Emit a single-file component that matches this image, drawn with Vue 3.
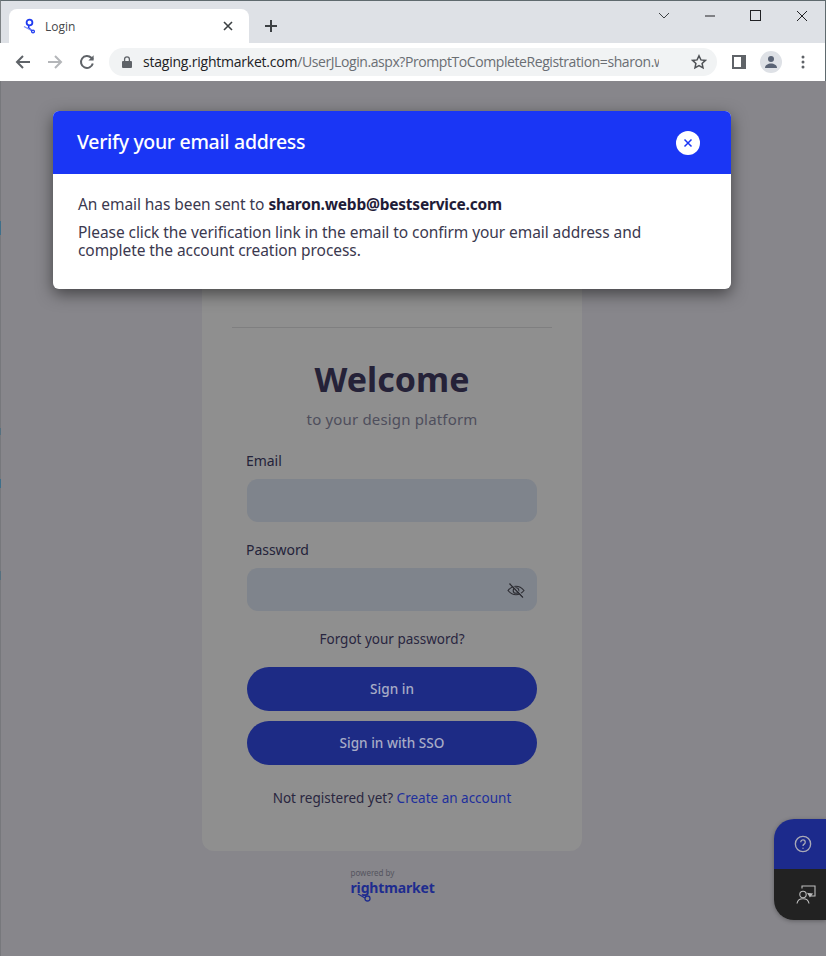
<script setup>
const url = { host: 'staging.rightmarket.com', path: '/UserJLogin.aspx?PromptToCompleteRegistration=sharon.webb@bestservice.com' }
</script>

<template>
  <div class="window">
    <div class="tabbar">
      <div class="tab">
        <svg class="favicon" width="16" height="16" viewBox="0 0 16 16" fill="none" stroke="#1f3bf0" stroke-width="1.800">
          <circle cx="8.500" cy="4.500" r="2.900" />
          <path d="M8 7.400 L7.500 9.500 L11 13" stroke-width="1.500" />
          <path d="M3 8.500 L10.500 12.500" stroke="#7d8df5" stroke-width="1.400" />
          <circle cx="12" cy="13.500" r="1.400" stroke-width="1.300" />
        </svg>
        <span class="tab-title">Login</span>
        <svg class="tab-close" width="10" height="10" viewBox="0 0 10 10" stroke="#3c4043" stroke-width="1.600"><path d="M1 1l8 8M9 1l-8 8" /></svg>
      </div>
      <svg class="new-tab" width="14" height="14" viewBox="0 0 14 14" stroke="#3c4043" stroke-width="2"><path d="M7 1v12M1 7h12" /></svg>
      <div class="win-controls">
        <div class="win-btn"><svg width="12" height="8" viewBox="0 0 12 8" fill="none" stroke="#3c4043"><path d="M1 1l5 5 5-5" /></svg></div>
        <div class="win-btn"><svg width="12" height="2" viewBox="0 0 12 2" stroke="#202124"><path d="M1 1h10" /></svg></div>
        <div class="win-btn"><svg class="nudge" width="11" height="11" viewBox="0 0 11 11" fill="none" stroke="#202124"><rect x=".5" y=".5" width="10" height="10" /></svg></div>
        <div class="win-btn"><svg width="12" height="12" viewBox="0 0 12 12" stroke="#202124"><path d="M1 1l10 10M11 1L1 11" /></svg></div>
      </div>
    </div>

    <div class="toolbar">
      <div class="tool"><svg width="16" height="16" viewBox="0 0 16 16" fill="none" stroke="#5f6368" stroke-width="2"><path d="M15 8H2M8 2L2 8l6 6" /></svg></div>
      <div class="tool"><svg width="16" height="16" viewBox="0 0 16 16" fill="none" stroke="#b4b6b9" stroke-width="2"><path d="M1 8h13M8 2l6 6-6 6" /></svg></div>
      <div class="tool"><svg width="16" height="16" viewBox="0 0 16 16" fill="none" stroke="#5f6368" stroke-width="2"><path d="M13.800 9.500A6 6 0 1 1 12.300 3.800L14 5.500" /><path d="M14.600 1.200v5.200H9.400z" fill="#5f6368" stroke="none" /></svg></div>
      <div class="omnibox">
        <svg class="lock" width="10" height="12" viewBox="0 0 10 12"><path fill="#5f6368" d="M1 5h8a1 1 0 0 1 1 1v5a1 1 0 0 1-1 1H1a1 1 0 0 1-1-1V6a1 1 0 0 1 1-1z" /><path fill="none" stroke="#5f6368" stroke-width="1.300" d="M2.600 5V3.200a2.400 2.400 0 0 1 4.800 0V5" /></svg>
        <div class="url"><span class="host">{{ url.host }}</span><span class="path">{{ url.path }}</span></div>
        <svg class="star" width="16" height="16" viewBox="0 0 16 16" fill="none" stroke="#4f5256" stroke-width="1.500"><path d="M8 1.800l1.900 4.100 4.500.5-3.300 3 .9 4.500L8 11.600l-4 2.300.9-4.500-3.300-3 4.500-.5z" /></svg>
      </div>
      <div class="tool"><svg width="14" height="14" viewBox="0 0 14 14"><path fill="#5f6368" fill-rule="evenodd" d="M0 0h14v14H0zM2 2v10h7V2z" /></svg></div>
      <div class="tool">
        <div class="avatar"><svg width="14" height="14" viewBox="0 0 14 14" fill="#5a6375"><circle cx="7" cy="4" r="3" /><path d="M1 13c0-3 3-4.500 6-4.500s6 1.500 6 4.500z" /></svg></div>
      </div>
      <div class="tool"><svg width="4" height="14" viewBox="0 0 4 14" fill="#5f6368"><circle cx="2" cy="2" r="1.500" /><circle cx="2" cy="7" r="1.500" /><circle cx="2" cy="12" r="1.500" /></svg></div>
    </div>

    <main class="page">
      <section class="card">
        <div class="divider"></div>
        <h1 class="welcome">Welcome</h1>
        <p class="sub">to your design platform</p>
        <form class="form">
          <label class="label">Email</label>
          <div class="input"></div>
          <label class="label label-pass">Password</label>
          <div class="input input-pass">
            <svg width="20" height="18" viewBox="0 0 20 18" fill="none" stroke="#2c2c32" stroke-width="1.100">
              <path d="M2 9.500C4.500 6.500 7 5.200 10 5.200s5.500 1.300 8 4.300c-2.500 3-5 4.300-8 4.300s-5.500-1.300-8-4.300z" />
              <circle cx="10" cy="9.500" r="2.800" />
              <path d="M3.500 2.500l13.500 14" stroke-width="1.400" />
              <path d="M5 2.500l13 13.500" stroke="#7f848c" stroke-width="1" />
            </svg>
          </div>
          <a class="forgot">Forgot your password?</a>
          <button type="button" class="btn">Sign in</button>
          <button type="button" class="btn btn-sso">Sign in with SSO</button>
          <p class="register">Not registered yet? <a class="create">Create an account</a></p>
        </form>
      </section>

      <div class="powered">
        <span class="powered-by">powered by</span>
        <span class="brand">rightmarket<svg class="brand-node" width="16" height="9" viewBox="0 0 16 9" fill="none" stroke="#1e2c8f" stroke-width="1.300"><path d="M1 1l7 4" /><circle cx="10.500" cy="5.500" r="2.500" /></svg></span>
      </div>

      <div class="modal">
        <header class="modal-head">
          <h2 class="modal-title">Verify your email address</h2>
          <button type="button" class="modal-close">
            <svg width="10" height="10" viewBox="0 0 10 10" stroke="#1a36f5" stroke-width="1.500"><path d="M1.500 1.500l7 7M8.500 1.500l-7 7" /></svg>
          </button>
        </header>
        <div class="modal-body">
          <p class="m-line">An email has been sent to <strong>sharon.webb@bestservice.com</strong></p>
          <p class="m-text">Please click the verification link in the email to confirm your email address and complete the account creation process.</p>
        </div>
      </div>

      <div class="help">
        <div class="help-top">
          <svg width="18" height="18" viewBox="0 0 20 20" fill="none" stroke="#a9a9b6" stroke-width="1.500"><circle cx="10" cy="10" r="8.500" /><path d="M7.500 8a2.500 2.500 0 1 1 3.800 2.100c-.9.600-1.300 1-1.300 2" /><path d="M10 14.200v1.200" /></svg>
        </div>
        <div class="help-bottom">
          <svg width="20" height="19" viewBox="0 0 20 19" fill="none" stroke="#bdbdbd" stroke-width="1.100"><path d="M6 3.500V1h13v10h-4" /><circle cx="7" cy="9.500" r="3.200" /><path d="M1 18.500c.5-3.500 3-4.800 6-4.800s5.500 1.300 6 4.800" /><path d="M12 8.500l4 .5-2 2.500z" fill="#bdbdbd" /></svg>
        </div>
      </div>
    </main>
  </div>
</template>

<style>
html, body { margin: 0; background: #87868b; }
</style>

<style scoped>
.window {
  width: 826px;
  height: 956px;
  overflow: hidden;
  display: flex;
  flex-direction: column;
  font-family: "Noto Sans", sans-serif;
}
.tabbar {
  height: 42px;
  flex: none;
  background: #dee1e6;
  border-top: 1px solid #5f6a6e;
  border-right: 1px solid #5f6a6e;
  border-left: 1px solid #7d8285;
  display: flex;
  align-items: flex-start;
  padding-left: 8px;
}
.tab {
  width: 240px;
  height: 34px;
  margin-top: 8px;
  background: #fff;
  border-radius: 8px 8px 0 0;
  display: flex;
  align-items: center;
  padding: 0 16px 0 12px;
  box-sizing: border-box;
}
.tab-title {
  margin-left: 8px;
  font: 12px "Open Sans", sans-serif;
  color: #45474a;
  flex: 1;
}
.new-tab { margin: 18px 0 0 15px; }
.win-controls {
  margin-left: auto;
  display: flex;
}
.win-btn {
  width: 46px;
  height: 29px;
  display: flex;
  align-items: center;
  justify-content: center;
}
.nudge { margin-right: 1px; }
.toolbar {
  height: 38px;
  flex: none;
  background: #fff;
  display: flex;
  align-items: center;
  padding: 0 6px 0 7px;
  border-right: 1px solid #5f6a6e;
  box-sizing: border-box;
}
.tool {
  width: 32px;
  height: 28px;
  flex: none;
  display: flex;
  align-items: center;
  justify-content: center;
}
.avatar {
  width: 22px;
  height: 22px;
  border-radius: 50%;
  background: #dee1e6;
  display: flex;
  align-items: center;
  justify-content: center;
}
.omnibox {
  flex: 1;
  min-width: 0;
  height: 28px;
  margin: 0 6px;
  border-radius: 14px;
  background: #f1f3f4;
  display: flex;
  align-items: center;
  padding: 0 10px 0 13px;
}
.lock { flex: none; }
.url {
  flex: 1;
  min-width: 0;
  margin: 0 32px 2px 11px;
  overflow: hidden;
  white-space: nowrap;
  font: 14px "Open Sans", sans-serif;
  letter-spacing: -0.22px;
  color: #6a6e73;
}
.host { color: #202124; }
.path { letter-spacing: -0.42px; }
.star { flex: none; }

.page {
  position: relative;
  flex: 1;
  background: #87868b;
  display: flex;
  flex-direction: column;
  align-items: center;
  padding: 0 42px 0 0;
  color: #2c2a42;
}
.page::before {
  content: "";
  position: absolute;
  left: 0;
  top: 0;
  bottom: 0;
  width: 1px;
  background: linear-gradient(#77787c 0 16%, #3e6f8a 16% 17.600%, #77787c 17.600% 39.700%, #55707f 39.700% 40.500%, #77787c 40.500% 45.500%, #3e6f8a 45.500% 46.500%, #77787c 46.500% 56%, #55707f 56% 57%, #77787c 57%);
}
.card {
  width: 380px;
  margin-top: 120px;
  background: #8f8f8f;
  border-radius: 0 0 12px 12px;
  padding: 126px 30px 0;
  box-sizing: border-box;
  height: 650px;
  display: flex;
  flex-direction: column;
  align-items: center;
}
.divider {
  width: 100%;
  height: 1px;
  flex: none;
  background: #7f7f80;
}
.welcome {
  margin: 28px 0 0;
  font-size: 34px;
  line-height: 46px;
  font-weight: 700;
  color: #252238;
}
.sub {
  margin: 7px 0 0;
  font-size: 15px;
  line-height: 20px;
  letter-spacing: 0.17px;
  color: #4e4e5c;
}
.form {
  width: 290px;
  margin-top: 22px;
  display: flex;
  flex-direction: column;
}
.label {
  margin-left: -1px;
  height: 20px;
  font-size: 14px;
  line-height: 20px;
  letter-spacing: -0.05px;
  color: #24233a;
}
.label-pass { margin-top: 18px; }
.input {
  height: 43px;
  margin-top: 8px;
  border-radius: 11px;
  background: #7f848c;
  display: flex;
  align-items: center;
  justify-content: flex-end;
  padding-right: 11px;
  box-sizing: border-box;
}
.forgot {
  margin-top: 18px;
  text-align: center;
  font-size: 13.500px;
  line-height: 20px;
  color: #29263f;
}
.btn {
  height: 44px;
  margin-top: 18px;
  border: 0;
  border-radius: 22px;
  padding: 0 0 2px;
  background: #1d2b85;
  color: #a7abc6;
  font: 500 13.600px "Noto Sans", sans-serif;
}
.btn-sso { margin-top: 10px; }
.register {
  margin: 23px 0 0;
  text-align: center;
  font-size: 13.500px;
  line-height: 20px;
  color: #29263f;
}
.create { color: #1e2f9c; }

.powered {
  margin-top: 17px;
  width: 83px;
  display: flex;
  flex-direction: column;
}
.powered-by {
  font-size: 8px;
  line-height: 10px;
  color: #55555f;
}
.brand {
  position: relative;
  margin-top: 2px;
  font-size: 14px;
  line-height: 16px;
  font-weight: 700;
  letter-spacing: -0.15px;
  color: #1e2c8f;
}
.brand-node { position: absolute; left: 6px; top: 13px; }

.modal {
  position: absolute;
  left: 53px;
  top: 30px;
  width: 678px;
  height: 178px;
  border-radius: 6px;
  background: #fff;
  overflow: hidden;
  box-shadow: 0 5px 16px rgba(0, 0, 0, 0.5);
}
.modal-head {
  height: 63px;
  background: #1a36f5;
  display: flex;
  align-items: center;
  justify-content: space-between;
  padding: 0 31px 0 24px;
}
.modal-title {
  margin: 0 0 2px;
  font-size: 19.500px;
  font-weight: 500;
  letter-spacing: -0.32px;
  color: #fff;
}
.modal-close {
  width: 24px;
  height: 24px;
  padding: 0;
  border: 0;
  border-radius: 50%;
  background: #fff;
  display: flex;
  align-items: center;
  justify-content: center;
}
.modal-body {
  padding: 21px 25px 0;
  font-size: 15.500px;
  line-height: 18px;
  letter-spacing: -0.07px;
  color: #3b394f;
}
.m-line { margin: 0; }
.m-line strong { color: #1f1c38; font-weight: 700; letter-spacing: -0.22px; }
.m-text { margin: 10px 0 0; }

.help {
  position: absolute;
  right: 0;
  top: 738px;
  width: 52px;
  height: 101px;
  border-radius: 20px 0 0 20px;
  overflow: hidden;
  display: flex;
  flex-direction: column;
  box-shadow: 0 1px 4px rgba(0, 0, 0, 0.3);
}
.help-top {
  height: 50px;
  background: #1c2a8c;
  display: flex;
  align-items: center;
  justify-content: flex-start;
  padding-left: 20px;
}
.help-bottom {
  flex: 1;
  background: #222;
  display: flex;
  align-items: center;
  justify-content: flex-start;
  padding-left: 22px;
}
</style>
